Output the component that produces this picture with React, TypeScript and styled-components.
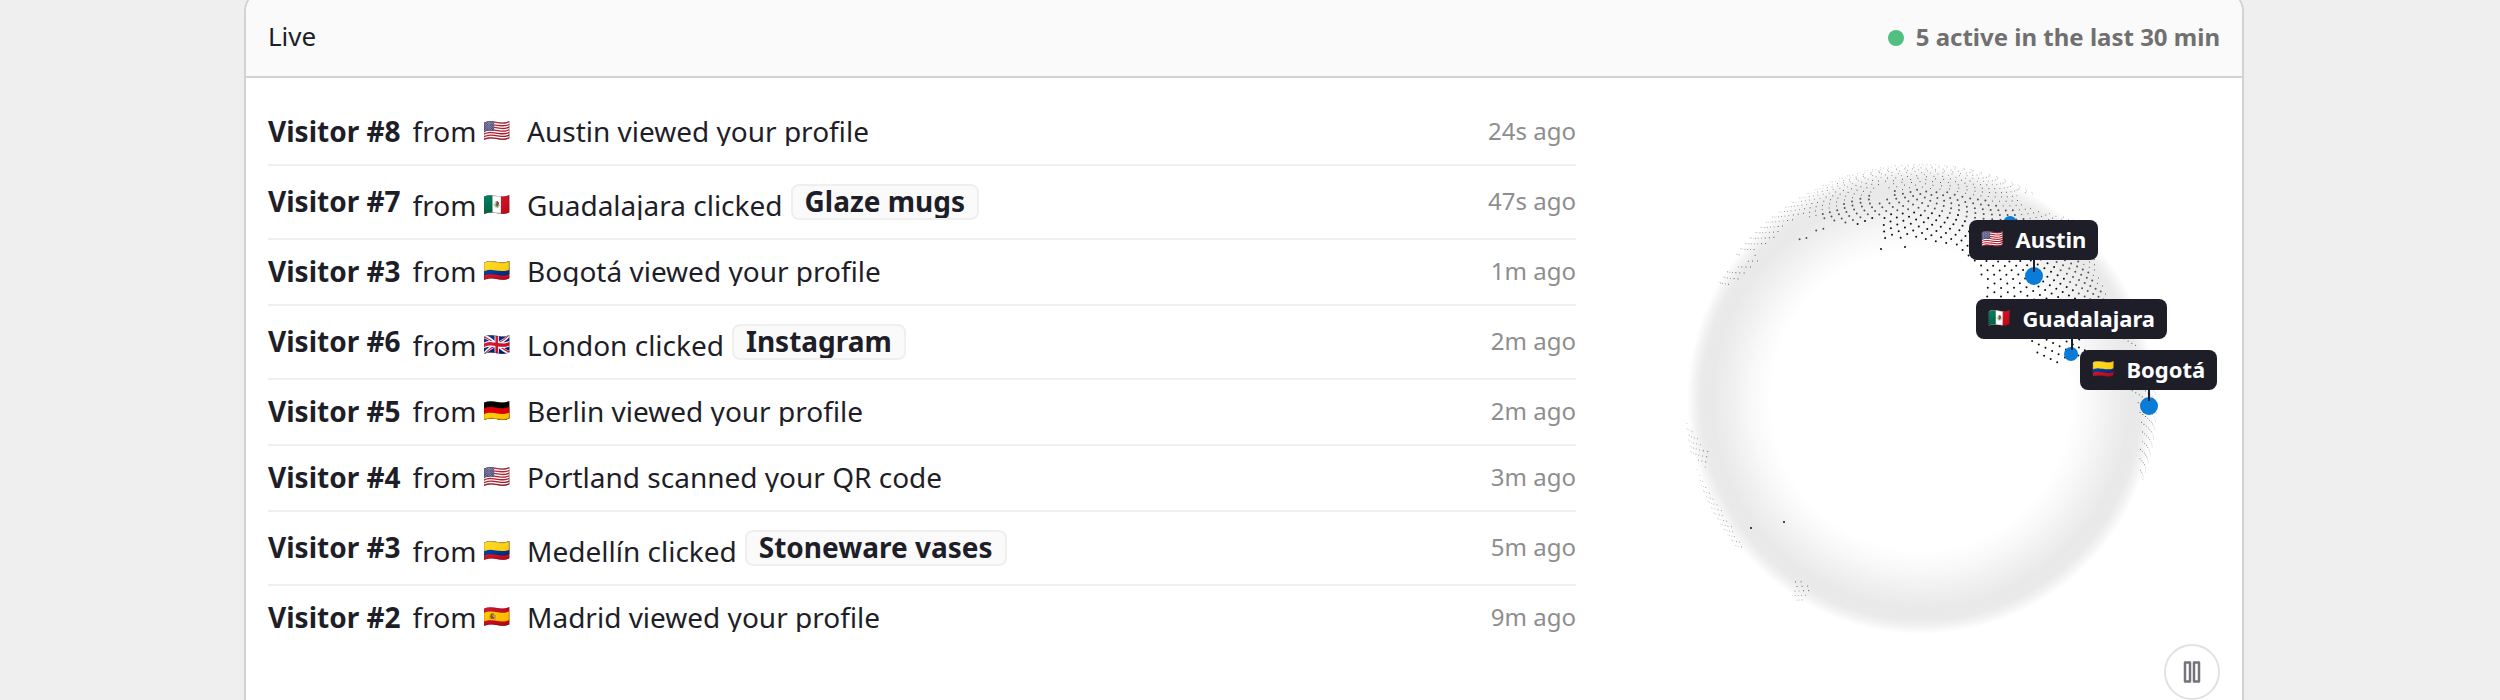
import React, { useMemo } from "react";
import styled, { createGlobalStyle } from "styled-components";

const GlobalStyle = createGlobalStyle`
  * { box-sizing: border-box; }
  body {
    margin: 0;
    background: #efefef;
    color: #1e1e28;
    font-family: "Noto Sans", "Noto Color Emoji", sans-serif;
  }
`;

const Page = styled.main`
  height: 100vh;
  overflow: hidden;
  padding: 0 12px 0 0;
`;

const Card = styled.section`
  max-width: 2000px;
  margin: -12px auto 0;
  background: #ffffff;
  border: 2px solid #d2d2d2;
  border-radius: 24px;
  overflow: hidden;
`;

const Header = styled.header`
  display: flex;
  align-items: center;
  justify-content: space-between;
  height: 88px;
  padding: 10px 22px 0;
  background: #fafafa;
  border-bottom: 2px solid #d2d2d2;
`;

const Title = styled.h2`
  margin: 0;
  padding-bottom: 4px;
  font-size: 26px;
  line-height: 36px;
  font-weight: 400;
`;

const Status = styled.p`
  display: flex;
  align-items: center;
  gap: 12px;
  margin: 0;
  font-size: 24px;
  line-height: 36px;
  font-weight: 700;
  color: #707070;
`;

const StatusText = styled.span`
  padding-bottom: 2px;
`;

const StatusDot = styled.span`
  width: 16px;
  height: 16px;
  border-radius: 50%;
  background: #52be80;
`;

const Body = styled.div`
  display: flex;
  align-items: flex-start;
  gap: 48px;
  padding: 22px 22px 32px;
`;

const Feed = styled.ul`
  flex: 1;
  min-width: 0;
  margin: 0;
  padding: 0;
  list-style: none;
`;

const Row = styled.li`
  display: flex;
  align-items: center;
  padding: 18px 0;
  border-bottom: 2px solid #efefef;
  font-size: 28px;
  line-height: 26px;

  &:last-child {
    border-bottom: 0;
  }
`;

const Visitor = styled.strong`
  font-weight: 700;
  margin-right: 12px;
  padding-bottom: 2px;
  white-space: nowrap;
`;

const Activity = styled.span`
  display: flex;
  align-items: flex-end;
  flex: 1;
  min-width: 0;
  overflow: hidden;
  white-space: pre;
`;

const Words = styled.span`
  padding-bottom: 2px;
`;

const Flag = styled.span<{ $small?: boolean }>`
  font-family: "Noto Color Emoji", sans-serif;
  font-weight: 400;
  font-size: ${(p) => (p.$small ? 18 : 22)}px;
  padding-bottom: ${(p) => (p.$small ? 0 : 2)}px;
  margin-right: ${(p) => (p.$small ? 12 : 16)}px;
`;

const Chip = styled.span`
  margin-left: 8px;
  padding: 2px 12px 4px;
  border: 2px solid #efefef;
  border-radius: 8px;
  background: #fafafa;
  font-weight: 700;
  overflow: hidden;
`;

const Time = styled.time`
  padding-bottom: 2px;
  font-size: 24px;
  color: #8e8e8e;
  white-space: nowrap;
`;

const GlobePanel = styled.div`
  position: relative;
  flex: 0 0 596px;
  height: 596px;
`;

const GlobeDrawing = styled.svg`
  display: block;
  width: 596px;
  height: 596px;
`;

const PlaceLabel = styled.span<{ $x: number; $y: number }>`
  position: absolute;
  left: ${(p) => p.$x}px;
  top: ${(p) => p.$y}px;
  display: flex;
  align-items: center;
  height: 40px;
  padding: 0 12px 2px;
  border-radius: 8px;
  background: #1e1e28;
  color: #ffffff;
  font-size: 22px;
  line-height: 38px;
  font-weight: 700;
  white-space: nowrap;
`;

const PauseButton = styled.button`
  position: absolute;
  right: 0;
  bottom: -4px;
  display: flex;
  align-items: center;
  justify-content: center;
  width: 56px;
  height: 56px;
  padding: 0;
  border: 2px solid #e2e2e2;
  border-radius: 50%;
  background: #ffffff;
  color: #74737e;
`;

type Visit = {
  id: number;
  flag: string;
  text: string;
  link?: string;
  ago: string;
};

const visits: Visit[] = [
  { id: 8, flag: "🇺🇸", text: "Austin viewed your profile", ago: "24s ago" },
  { id: 7, flag: "🇲🇽", text: "Guadalajara clicked", link: "Glaze mugs", ago: "47s ago" },
  { id: 3, flag: "🇨🇴", text: "Bogotá viewed your profile", ago: "1m ago" },
  { id: 6, flag: "🇬🇧", text: "London clicked", link: "Instagram", ago: "2m ago" },
  { id: 5, flag: "🇩🇪", text: "Berlin viewed your profile", ago: "2m ago" },
  { id: 4, flag: "🇺🇸", text: "Portland scanned your QR code", ago: "3m ago" },
  { id: 3, flag: "🇨🇴", text: "Medellín clicked", link: "Stoneware vases", ago: "5m ago" },
  { id: 2, flag: "🇪🇸", text: "Madrid viewed your profile", ago: "9m ago" },
];

const pins = [
  { x: 386, y: 123, r: 7 },
  { x: 410, y: 176, r: 9 },
  { x: 447, y: 254, r: 7 },
  { x: 525, y: 306, r: 9 },
];

const places = [
  { name: "Austin", flag: "🇺🇸", x: 345, y: 120, stemX: 410, stemTo: 172 },
  { name: "Guadalajara", flag: "🇲🇽", x: 352, y: 199, stemX: 448, stemTo: 250 },
  { name: "Bogotá", flag: "🇨🇴", x: 456, y: 250, stemX: 525, stemTo: 301 },
];

type Point = [number, number];

/* Land outlines as seen on the disc, in drawing units. */
const land: Point[][] = [
  // Siberia, the Arctic and North America
  [
    [110, 158], [128, 128], [160, 100], [200, 78], [240, 64], [300, 60], [350, 68], [412, 90],
    [412, 94], [394, 94], [400, 104], [412, 110], [450, 120], [470, 134], [472, 170], [482, 190],
    [484, 205], [440, 240], [420, 240], [364, 205], [358, 194], [362, 180], [346, 163],
    [334, 150], [318, 144], [300, 142], [282, 140], [260, 138], [258, 112], [250, 120],
    [234, 124], [212, 124], [190, 118], [176, 117], [162, 125], [152, 140], [134, 148],
  ],
  // Pacific coast of Asia
  [[92, 186], [104, 170], [120, 164], [134, 152], [136, 160], [118, 178], [110, 184]],
  [[174, 140], [202, 124], [206, 128], [178, 142]],
  // Central America
  [[408, 236], [460, 236], [462, 248], [476, 262], [508, 286], [516, 300], [506, 296], [476, 280], [462, 276], [450, 258], [434, 264], [408, 252]],
  [[490, 236], [512, 242], [512, 246], [494, 242]],
  // South America
  [[510, 290], [532, 288], [533, 330], [530, 360], [522, 386], [515, 380], [517, 340], [514, 310]],
  // Australia and New Zealand
  [[60, 320], [72, 334], [86, 354], [84, 372], [74, 362], [66, 350]],
  [[72, 366], [78, 378], [104, 420], [118, 446], [112, 456], [86, 420]],
  [[170, 478], [188, 484], [190, 492], [176, 502], [168, 498]],
];

const holes: Point[][] = [
  [[250, 86], [262, 84], [264, 98], [250, 102]],
  [[392, 92], [400, 92], [410, 104], [402, 108]],
];

const islands: Point[] = [[127, 428], [160, 422], [257, 149], [281, 147]];

function inside(poly: Point[], x: number, y: number) {
  let hit = false;
  for (let i = 0, j = poly.length - 1; i < poly.length; j = i++) {
    const [xi, yi] = poly[i];
    const [xj, yj] = poly[j];
    if (yi > y !== yj > y && x < ((xj - xi) * (y - yi)) / (yj - yi) + xi) hit = !hit;
  }
  return hit;
}

const CENTER_X = 297;
const CENTER_Y = 300;
const RADIUS = 236;
const SAMPLES = 10000;
const TILT = 0.3;

const levels = [
  { min: 0, width: 1, opacity: 0.22 },
  { min: 0.16, width: 1, opacity: 0.45 },
  { min: 0.3, width: 1, opacity: 0.75 },
  { min: 0.45, width: 2, opacity: 0.65 },
  { min: 0.6, width: 2, opacity: 0.95 },
];

/* Golden-spiral lattice over the sphere, kept where it falls on land. */
function buildDots() {
  const paths = levels.map(() => "");
  for (let i = 0; i < SAMPLES; i++) {
    const up = 1 - (2 * i + 1) / SAMPLES;
    const ring = Math.sqrt(1 - up * up);
    const angle = i * Math.PI * (3 - Math.sqrt(5));
    const px = ring * Math.cos(angle);
    const pz = ring * Math.sin(angle);
    const z = pz * Math.cos(TILT) + up * Math.sin(TILT);
    if (z < 0.03) continue;
    const x = CENTER_X + RADIUS * px;
    const y = CENTER_Y - RADIUS * (up * Math.cos(TILT) - pz * Math.sin(TILT));
    if (!land.some((p) => inside(p, x, y)) || holes.some((p) => inside(p, x, y))) continue;
    let level = 0;
    while (level < levels.length - 1 && z >= levels[level + 1].min) level++;
    paths[level] += `M${x.toFixed(1)} ${y.toFixed(1)}h.01`;
  }
  paths[4] += islands.map(([x, y]) => `M${x} ${y}h.01`).join("");
  return paths;
}

function Globe() {
  const dots = useMemo(buildDots, []);
  return (
    <GlobeDrawing viewBox="0 0 596 596" role="img" aria-label="Visitor locations">
      <defs>
        <radialGradient id="shade" gradientUnits="userSpaceOnUse" cx={CENTER_X} cy={CENTER_Y} r={234}>
          <stop offset="0.64" stopColor="#ffffff" />
          <stop offset="0.72" stopColor="#f9f9f9" />
          <stop offset="0.8" stopColor="#f1f1f1" />
          <stop offset="0.89" stopColor="#e9e9e9" />
          <stop offset="0.94" stopColor="#eaeaea" />
          <stop offset="0.97" stopColor="#f3f3f3" />
          <stop offset="1" stopColor="#ffffff" />
        </radialGradient>
      </defs>
      <circle cx={CENTER_X} cy={CENTER_Y} r={234} fill="url(#shade)" />
      {levels.map((l, i) => (
        <path key={l.min} d={dots[i]} stroke="#000000" strokeOpacity={l.opacity} strokeWidth={l.width} strokeLinecap="round" fill="none" />
      ))}
      {pins.map((p) => (
        <circle key={p.x} cx={p.x} cy={p.y} r={p.r} fill="#0a7cd8" />
      ))}
      {places.map((p) => (
        <path key={p.name} d={`M${p.stemX} ${p.y + 36}V${p.stemTo}`} stroke="#1e1e28" strokeWidth="2" />
      ))}
    </GlobeDrawing>
  );
}

export default function App() {
  return (
    <>
      <GlobalStyle />
      <Page>
        <Card>
          <Header>
            <Title>Live</Title>
            <Status>
              <StatusDot />
              <StatusText>5 active in the last 30 min</StatusText>
            </Status>
          </Header>
          <Body>
            <Feed>
              {visits.map((v) => (
                <Row key={v.ago + v.id}>
                  <Visitor>Visitor #{v.id}</Visitor>
                  <Activity>
                    <Words>from </Words>
                    <Flag>{v.flag}</Flag>
                    <Words>{v.text}</Words>
                    {v.link && <Chip>{v.link}</Chip>}
                  </Activity>
                  <Time>{v.ago}</Time>
                </Row>
              ))}
            </Feed>
            <GlobePanel>
              <Globe />
              {places.map((p) => (
                <PlaceLabel key={p.name} $x={p.x} $y={p.y}>
                  <Flag $small>{p.flag}</Flag>
                  {p.name}
                </PlaceLabel>
              ))}
              <PauseButton type="button" aria-label="Pause">
                <svg width="18" height="22" viewBox="0 0 18 22" fill="none" stroke="currentColor" strokeWidth="2.5" strokeLinejoin="round">
                  <rect x="2" y="1.5" width="5" height="19" />
                  <rect x="11" y="1.5" width="5" height="19" />
                </svg>
              </PauseButton>
            </GlobePanel>
          </Body>
        </Card>
      </Page>
    </>
  );
}
